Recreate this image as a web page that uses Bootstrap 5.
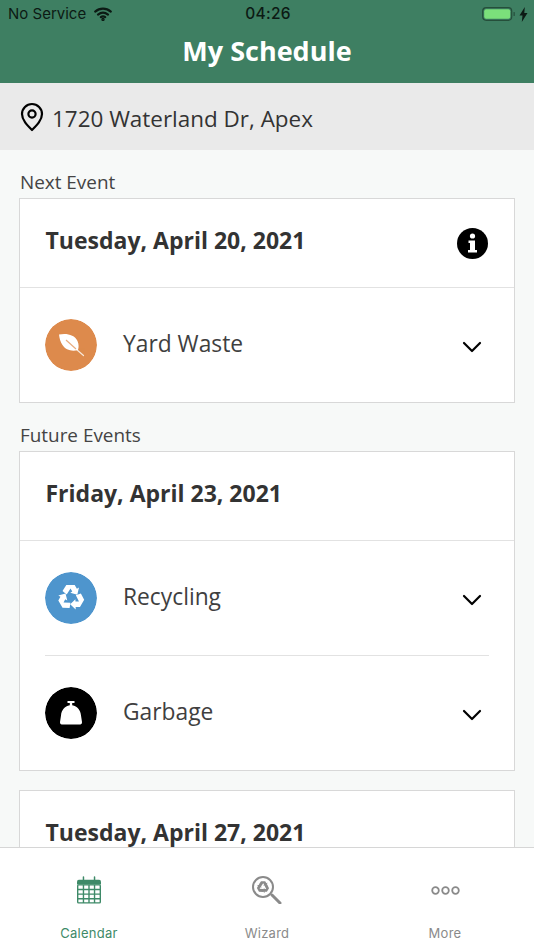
<!doctype html>
<html lang="en"><head><meta charset="utf-8"><title>My Schedule</title>
<link href="https://cdn.jsdelivr.net/npm/bootstrap@5.3.0/dist/css/bootstrap.min.css" rel="stylesheet">
<style>
html,body{height:100%;margin:0}
body{font-family:"Open Sans",sans-serif;color:#333;background:#f7f9f8;overflow:hidden}
.app-shell{width:534px;height:950px}
.top-green{height:83px;background:#3e7f62;flex:none}
.status-line{height:28px;padding:0 6px 0 8px;font-family:Inter,Roboto,sans-serif;font-size:15px;color:#0c1a14}
.status-line>div{flex:1 1 0}
.clock{font-weight:500;font-size:15.5px;letter-spacing:.3px}
.title-line{font-size:27px;font-weight:700;color:#fff;line-height:36px;margin:0;padding-top:5px;text-align:center}
.addr-bar{height:67px;background:#eaeaea;padding:5px 0 0 20px;font-size:22.45px;flex:none;gap:8px}
.addr-bar svg{position:relative;top:-2px}
.scroll-zone{flex:1 1 0;min-height:0;overflow:hidden;padding:0 19px}
.sec-label{font-size:18.9px;line-height:25px;color:#444;height:25px;margin-top:20px;margin-bottom:3px;padding-left:1px}
.sched-card{border:1px solid #d8d8d8;border-radius:0;background:#fff}
.sched-card+.sched-card{margin-top:19px}
.sched-date{height:89px;padding:0 26px 0 25.5px;border-bottom:1px solid #e2e2e2;font-size:23px;font-weight:700;color:#333}
.sched-date span{position:relative;top:-3px}
.sched-item{height:114px;margin:0 25px}
.sched-item+.sched-item{height:115px;border-top:1px solid #e2e2e2}
.sched-item .it-name{font-size:22.8px;margin-left:26px;color:#3f3f3f;position:relative;top:-1px}
.round-ico{width:52px;height:52px;border-radius:50%;flex:none}
.chev{margin-left:auto;margin-right:7px;position:relative;top:2px}
.info-ico{margin-right:0}
.tab-bar{height:103px;background:#fff;border-top:1px solid #d6d6d6;flex:none}
.tab-cell{flex:1 1 0;height:100%;padding-top:28px;font-family:Inter,Roboto,sans-serif;font-size:13px;letter-spacing:.25px;color:#8a8a8a}
.tab-cell.on{color:#3e8a68}
.tab-ic{height:28px}
.tab-lb{margin-top:20px;line-height:18px}
</style></head><body>
<div class="app-shell d-flex flex-column">
<header class="top-green">
  <div class="status-line d-flex align-items-center">
    <div class="d-flex align-items-center gap-2">No Service
      <svg width="18" height="14" viewBox="0 0 18 14" fill="none" stroke="#0c1a14" stroke-width="2.2" stroke-linecap="round"><path d="M1.2 4.6C5.8.6 12.2.6 16.8 4.6"/><path d="M4 7.6c3-2.5 7-2.5 10 0"/><path d="M6.8 10.2c1.3-1 3.100-1 4.400 0"/><circle cx="9" cy="12.400" r=".6" fill="#0c1a14"/></svg>
    </div>
    <div class="clock text-center">04:26</div>
    <div class="d-flex align-items-center justify-content-end gap-1">
      <svg width="33" height="14" viewBox="0 0 33 14"><rect x=".7" y=".7" width="29" height="12.600" rx="3.500" fill="none" stroke="#1d3d2e" stroke-width="1.200" opacity=".75"/><rect x="2.200" y="2.200" width="26" height="9.600" rx="2" fill="#7be07b"/><rect x="31.500" y="5" width="1.300" height="4" rx=".6" fill="#1d3d2e" opacity=".7"/></svg>
      <svg width="9" height="15" viewBox="0 0 9 15"><path d="M5.800 0 .5 8.500h3L2.800 15 8.500 6h-3.200z" fill="#0c1a14"/></svg>
    </div>
  </div>
  <h1 class="title-line">My Schedule</h1>
</header>
<div class="addr-bar d-flex align-items-center">
  <svg width="24" height="30" viewBox="0 0 24 30" fill="none" stroke="#000" stroke-width="2.200"><path d="M12 28C7 23 2 18 2 12a10 10 0 0 1 20 0c0 6-5 11-10 16z" stroke-linejoin="round"/><circle cx="12" cy="12" r="3.600"/></svg>
  <span>1720 Waterland Dr, Apex</span>
</div>
<main class="scroll-zone">
  <div class="sec-label">Next Event</div>
  <section class="sched-card">
    <div class="sched-date d-flex align-items-center justify-content-between"><span>Tuesday, April 20, 2021</span>
      <svg class="info-ico" width="31" height="31" viewBox="0 0 31 31"><circle cx="15.500" cy="15.500" r="15.500" fill="#000"/><circle cx="15.500" cy="8" r="2.600" fill="#fff"/><path d="M11.500 12.500h6.500v9.500h2v2.500h-9V22h2v-7h-1.500z" fill="#fff"/></svg>
    </div>
    <div class="sched-item d-flex align-items-center">
      <svg class="round-ico" viewBox="0 0 52 52"><circle cx="26" cy="26" r="26" fill="#dd8a4c"/><path d="M14 15.500c7.500-1.500 15.500 0 18.500 6.500 1.500 3.500 1.300 6.500.5 9-6 1.800-12.500 0-15.500-5-2-3-3-6.500-3.500-10.500z" fill="#fff"/><path d="M31 30l7.500 6.500" stroke="#fff" stroke-width="1.200" stroke-linecap="round" opacity=".8"/><path d="M21 21l10 9" stroke="#e9ad80" stroke-width="1.200"/></svg>
      <span class="it-name">Yard Waste</span>
      <svg class="chev" width="20" height="12" viewBox="0 0 20 12" fill="none" stroke="#000" stroke-width="2.200" stroke-linecap="round" stroke-linejoin="round"><path d="M2 2l8 8 8-8"/></svg>
    </div>
  </section>
  <div class="sec-label">Future Events</div>
  <section class="sched-card">
    <div class="sched-date d-flex align-items-center"><span>Friday, April 23, 2021</span></div>
    <div class="sched-item d-flex align-items-center">
      <svg class="round-ico" viewBox="0 0 52 52"><circle cx="26" cy="26" r="26" fill="#4e95cd"/>
        <g fill="#fff"><path id="rc-arm" d="M17.500 19l3.800-6h8.400l2.200 3.700 2.100-1.200-1.700 7.300-7-2 2-1.200-1.800-3-3.800 5.800z"/><use href="#rc-arm" transform="rotate(120 26 25.500)"/><use href="#rc-arm" transform="rotate(240 26 25.500)"/></g></svg>
      <span class="it-name">Recycling</span>
      <svg class="chev" width="20" height="12" viewBox="0 0 20 12" fill="none" stroke="#000" stroke-width="2.200" stroke-linecap="round" stroke-linejoin="round"><path d="M2 2l8 8 8-8"/></svg>
    </div>
    <div class="sched-item d-flex align-items-center">
      <svg class="round-ico" viewBox="0 0 52 52"><circle cx="26" cy="26" r="26" fill="#000"/><path d="M22.500 14h7v2h-2.300v2.300c5.300.8 8.300 5.200 8.800 10.200l1 6.500c.1 1.500-.6 2.500-1.800 2.500H16.800c-1.200 0-1.900-1-1.800-2.500l1-6.500c.5-5 3.500-9.400 8.800-10.200V16h-2.300z" fill="#fff"/></svg>
      <span class="it-name">Garbage</span>
      <svg class="chev" width="20" height="12" viewBox="0 0 20 12" fill="none" stroke="#000" stroke-width="2.200" stroke-linecap="round" stroke-linejoin="round"><path d="M2 2l8 8 8-8"/></svg>
    </div>
  </section>
  <section class="sched-card">
    <div class="sched-date d-flex align-items-center"><span>Tuesday, April 27, 2021</span></div>
  </section>
</main>
<nav class="tab-bar d-flex">
  <div class="tab-cell on d-flex flex-column align-items-center">
    <div class="tab-ic"><svg width="24" height="28" viewBox="0 0 26 30"><path d="M2 4h22a2 2 0 0 1 2 2v3H0V6a2 2 0 0 1 2-2z" fill="#3e8a68"/><path d="M7 1v6M19 1v6" stroke="#3e8a68" stroke-width="1.600" stroke-linecap="round"/><rect x=".75" y="9.500" width="24.500" height="19.500" rx="1" fill="none" stroke="#3e8a68" stroke-width="1.500"/><path d="M7 9.500V29M13 9.500V29M19 9.500V29M1 14.500h24M1 19.500h24M1 24.500h24" stroke="#3e8a68" stroke-width="1.500"/></svg></div>
    <div class="tab-lb">Calendar</div>
  </div>
  <div class="tab-cell d-flex flex-column align-items-center">
    <div class="tab-ic"><svg width="30" height="28" viewBox="0 0 30 28" fill="none"><circle cx="11" cy="11" r="10" stroke="#8a8a8a" stroke-width="2"/><path d="M20 19l8 8" stroke="#8a8a8a" stroke-width="3" stroke-linecap="round"/><g fill="#8a8a8a"><path id="wz-arm" d="M6.800 8.500 9 5.200h4.200l1.200 2 1-.6-.8 3.700-3.500-1 1-.6-.9-1.500-2 3z"/><use href="#wz-arm" transform="rotate(120 11 11)"/><use href="#wz-arm" transform="rotate(240 11 11)"/></g></svg></div>
    <div class="tab-lb">Wizard</div>
  </div>
  <div class="tab-cell d-flex flex-column align-items-center">
    <div class="tab-ic d-flex align-items-center"><svg width="29" height="9" viewBox="0 0 29 9" fill="none" stroke="#8a8a8a" stroke-width="1.800"><circle cx="4.500" cy="4.500" r="3.300"/><circle cx="14.500" cy="4.500" r="3.300"/><circle cx="24.500" cy="4.500" r="3.300"/></svg></div>
    <div class="tab-lb">More</div>
  </div>
</nav>
</div>
</body></html>
